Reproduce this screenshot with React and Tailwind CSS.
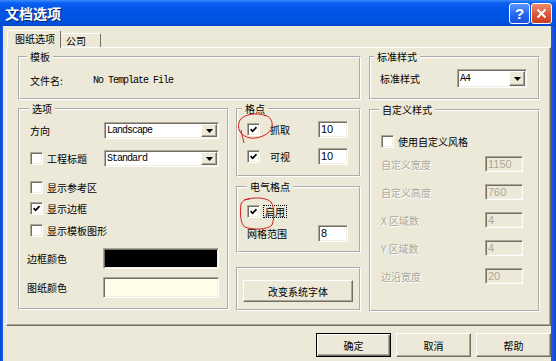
import React from 'react';

const sunken =
  'border border-t-[#aca899] border-l-[#aca899] border-r-white border-b-white shadow-[inset_1px_1px_0_#716f64,inset_-1px_-1px_0_#f1efe2]';
const raised =
  'border border-t-white border-l-white border-r-[#716f64] border-b-[#716f64] shadow-[inset_-1px_-1px_0_#aca899]';
const mono = "font-['Liberation_Mono',monospace] text-[10px] tracking-[-1px]";

const Check = ({ checked }) => (
  <span className={`w-[13px] h-[13px] shrink-0 bg-white flex items-center justify-center ${sunken}`}>
    {checked && (
      <svg width="7" height="7" viewBox="0 0 7 7">
        <path d="M0.6 3.2 L2.6 5.3 L6.5 1.2" stroke="#000" strokeWidth="1.7" fill="none" />
      </svg>
    )}
  </span>
);

const Combo = ({ value, className }) => (
  <div className={`flex bg-white ${sunken} ${className}`}>
    <span className={`flex-1 pl-[2px] flex items-center ${mono}`}>{value}</span>
    <span className={`w-[16px] m-[1px] bg-[#ece9d8] flex items-center justify-center ${raised}`}>
      <svg width="7" height="4" viewBox="0 0 7 4">
        <path d="M0 0h7L3.5 4z" fill="#000" />
      </svg>
    </span>
  </div>
);

const Field = ({ value, disabled, className }) => (
  <div
    className={`flex items-center pl-[2px] font-['Liberation_Sans',sans-serif] text-[11px] ${sunken} ${
      disabled ? 'bg-[#ece9d8] text-[#aca899]' : 'bg-white text-black'
    } ${className}`}
  >
    {value}
  </div>
);

const Group = ({ title, legend, className, children }) => (
  <fieldset className={`border-2 [border-style:groove] border-white ${className}`}>
    <legend className={`px-[3px] text-[10px] leading-[12px] ${legend}`}>{title}</legend>
    {children}
  </fieldset>
);

const Button = ({ children, isDefault, className }) => (
  <div
    className={`flex items-center justify-center text-[10px] bg-[#ece9d8] ${
      isDefault
        ? 'border border-black shadow-[inset_1px_1px_0_#fff,inset_-1px_-1px_0_#716f64,inset_-2px_-2px_0_#aca899]'
        : raised
    } ${className}`}
  >
    {children}
  </div>
);

export default function App() {
  return (
    <div className="relative w-[556px] h-[361px] overflow-hidden flex flex-col font-['Noto_Sans_CJK_SC',sans-serif] text-black select-none">
      {/* title bar */}
      <div className="h-[26px] flex items-center pl-[5px] pr-[4px] bg-[linear-gradient(to_bottom,#3b8cff_0%,#0a5ef0_12%,#0055e5_45%,#0053e0_85%,#0046cc_100%)]">
        <span className="flex-1 text-white font-bold text-[14px] leading-[16px] [text-shadow:1px_1px_0_#0a246a]">文档选项</span>
        <div className="flex gap-[1px]">
          <div className="w-[21px] h-[21px] rounded-[3px] border border-white bg-[linear-gradient(to_bottom,#5a95ff,#2363ef_60%,#1b52d8)] flex items-center justify-center text-white font-bold text-[15px] leading-none font-['Liberation_Sans',sans-serif]">
            ?
          </div>
          <div className="w-[21px] h-[21px] rounded-[3px] border border-white bg-[linear-gradient(to_bottom,#ef8a6c,#e0553a_55%,#c8401f)] flex items-center justify-center">
            <svg width="11" height="11" viewBox="0 0 11 11">
              <path d="M1.5 1.5 L9.5 9.5 M9.5 1.5 L1.5 9.5" stroke="#fff" strokeWidth="2" />
            </svg>
          </div>
        </div>
      </div>

      <div className="flex h-[335px]">
        <div className="w-[3px] bg-[linear-gradient(to_right,#0a46d0,#1c5fe8)]" />
        <div className="w-[548px] bg-[#ece9d8] flex flex-col pt-[4px]">
          {/* tabs */}
          <div className="flex items-end h-[17px] pl-[4px]">
            <div className="relative z-10 w-[54px] h-[18px] mb-[-1px] bg-[#ece9d8] border-l border-t border-l-white border-t-white border-r border-r-[#716f64] rounded-t-[2px] text-[10px] leading-[12px] pl-[7px] pt-[2px]">
              图纸选项
            </div>
            <div className="w-[40px] h-[14px] bg-[#ece9d8] border-t border-t-white border-r border-r-[#716f64] rounded-tr-[2px] text-[10px] leading-[12px] pl-[5px] pt-[1px]">
              公司
            </div>
          </div>

          {/* tab panel */}
          <div className="ml-[3px] w-[545px] h-[279px] border-l border-t border-l-white border-t-white border-r border-b border-r-[#716f64] border-b-[#716f64] shadow-[inset_-1px_-1px_0_#aca899] pt-[3px] pl-[11px]">
            <div className="flex gap-[8px]">
              <Group title="模板" legend="ml-[7px]" className="w-[343px] h-[49px]">
                <div className="flex items-center h-[20px] mt-[7px] pl-[10px] text-[10px]">
                  <span className="w-[63px]">文件名:</span>
                  <span className={mono}>No Template File</span>
                </div>
              </Group>
              <Group title="标准样式" legend="ml-[3px]" className="w-[171px] h-[49px]">
                <div className="flex items-center mt-[6px] pl-[9px] text-[10px]">
                  <span className="w-[77px]">标准样式</span>
                  <Combo value="A4" className="w-[70px] h-[19px]" />
                </div>
              </Group>
            </div>

            <div className="flex mt-[3px]">
              {/* 选项 */}
              <Group title="选项" legend="ml-[9px]" className="w-[211px] h-[207px]">
                <div className="flex flex-col pl-[10px] pt-[7px] text-[10px]">
                  <div className="flex items-center h-[17px]">
                    <span className="w-[74px]">方向</span>
                    <Combo value="Landscape" className="w-[115px] h-[17px]" />
                  </div>
                  <div className="flex items-center h-[17px] mt-[11px]">
                    <Check />
                    <span className="ml-[4px] w-[57px]">工程标题</span>
                    <Combo value="Standard" className="w-[115px] h-[17px]" />
                  </div>
                  <div className="flex items-center h-[13px] mt-[14px]">
                    <Check />
                    <span className="ml-[4px]">显示参考区</span>
                  </div>
                  <div className="flex items-center h-[13px] mt-[8px]">
                    <Check checked />
                    <span className="ml-[4px]">显示边框</span>
                  </div>
                  <div className="flex items-center h-[13px] mt-[9px]">
                    <Check />
                    <span className="ml-[4px]">显示模板图形</span>
                  </div>
                  <div className="flex items-center h-[21px] mt-[11px] -ml-[3px]">
                    <span className="w-[76px]">边框颜色</span>
                    <div className={`w-[116px] h-[21px] bg-black ${sunken}`} />
                  </div>
                  <div className="flex items-center h-[21px] mt-[8px] -ml-[3px]">
                    <span className="w-[76px]">图纸颜色</span>
                    <div className={`w-[116px] h-[21px] bg-[#fffee8] ${sunken}`} />
                  </div>
                </div>
              </Group>

              {/* middle column */}
              <div className="flex flex-col ml-[7px] w-[125px]">
                <Group title="格点" legend="ml-[4px]" className="w-[125px] h-[74px]">
                  <div className="flex flex-col pl-[9px] pt-[6px] text-[10px]">
                    <div className="flex items-center h-[17px]">
                      <Check checked />
                      <span className="ml-[10px] w-[48px]">抓取</span>
                      <Field value="10" className="w-[30px] h-[17px]" />
                    </div>
                    <div className="flex items-center h-[17px] mt-[10px]">
                      <Check checked />
                      <span className="ml-[10px] w-[48px]">可视</span>
                      <Field value="10" className="w-[30px] h-[17px]" />
                    </div>
                  </div>
                </Group>
                <Group title="电气格点" legend="ml-[9px]" className="w-[125px] h-[72px] mt-[4px]">
                  <div className="flex flex-col pl-[9px] pt-[10px] text-[10px]">
                    <div className="flex items-center h-[17px]">
                      <Check checked />
                      <span className="ml-[3px] px-[1px] leading-[11px] border border-dotted border-black">启用</span>
                    </div>
                    <div className="flex items-center h-[17px] mt-[5px]">
                      <span className="w-[71px]">网格范围</span>
                      <Field value="8" className="w-[30px] h-[17px]" />
                    </div>
                  </div>
                </Group>
                <div className="w-[125px] h-[44px] mt-[14px] border-2 [border-style:groove] border-white pl-[5px] pt-[11px]">
                  <Button className="w-[110px] h-[22px]">改变系统字体</Button>
                </div>
              </div>

              {/* 自定义样式 */}
              <Group title="自定义样式" legend="ml-[8px]" className="w-[171px] h-[208px] ml-[8px] mt-[1px]">
                <div className="flex flex-col pl-[10px] pt-[19px] text-[10px]">
                  <div className="flex items-center h-[13px]">
                    <Check />
                    <span className="ml-[4px]">使用自定义风格</span>
                  </div>
                  {[
                    ['自定义宽度', '1150', 'mt-[8px]'],
                    ['自定义高度', '760', 'mt-[12px]'],
                    ['X 区域数', '4', 'mt-[12px]'],
                    ['Y 区域数', '4', 'mt-[12px]'],
                    ['边沿宽度', '20', 'mt-[12px]'],
                  ].map(([label, val, mt]) => (
                    <div key={label} className={`flex items-center h-[16px] ${mt}`}>
                      <span className="w-[104px] text-[#aca899] [text-shadow:1px_1px_0_#fff]">{label}</span>
                      <Field value={val} disabled className="w-[38px] h-[16px]" />
                    </div>
                  ))}
                </div>
              </Group>
            </div>
          </div>

          {/* dialog buttons */}
          <div className="flex justify-end gap-[5px] mt-[7px]">
            <Button isDefault className="w-[75px] h-[24px]">确定</Button>
            <Button className="w-[75px] h-[24px]">取消</Button>
            <Button className="w-[75px] h-[24px]">帮助</Button>
          </div>
        </div>
        <div className="flex-1 bg-[linear-gradient(to_right,#1c5fe8,#0a46d0)]" />
      </div>

      {/* red annotation marks */}
      <svg className="absolute inset-0 pointer-events-none" width="556" height="361">
        <path
          d="M266,116 C258,112 244,114 240,120 C236,128 240,136 250,138 C260,139 270,134 272,127 C273,121 270,116 264,115 M241,130 C242,135 243,139 244,143"
          stroke="#d42020"
          strokeWidth="1"
          fill="none"
        />
        <path
          d="M244,200 C252,197 266,197 271,202 C275,208 274,220 272,225 C268,230 252,230 245,227 C240,224 240,212 241,204 C242,201 246,199 250,199"
          stroke="#d42020"
          strokeWidth="1"
          fill="none"
        />
      </svg>
    </div>
  );
}
